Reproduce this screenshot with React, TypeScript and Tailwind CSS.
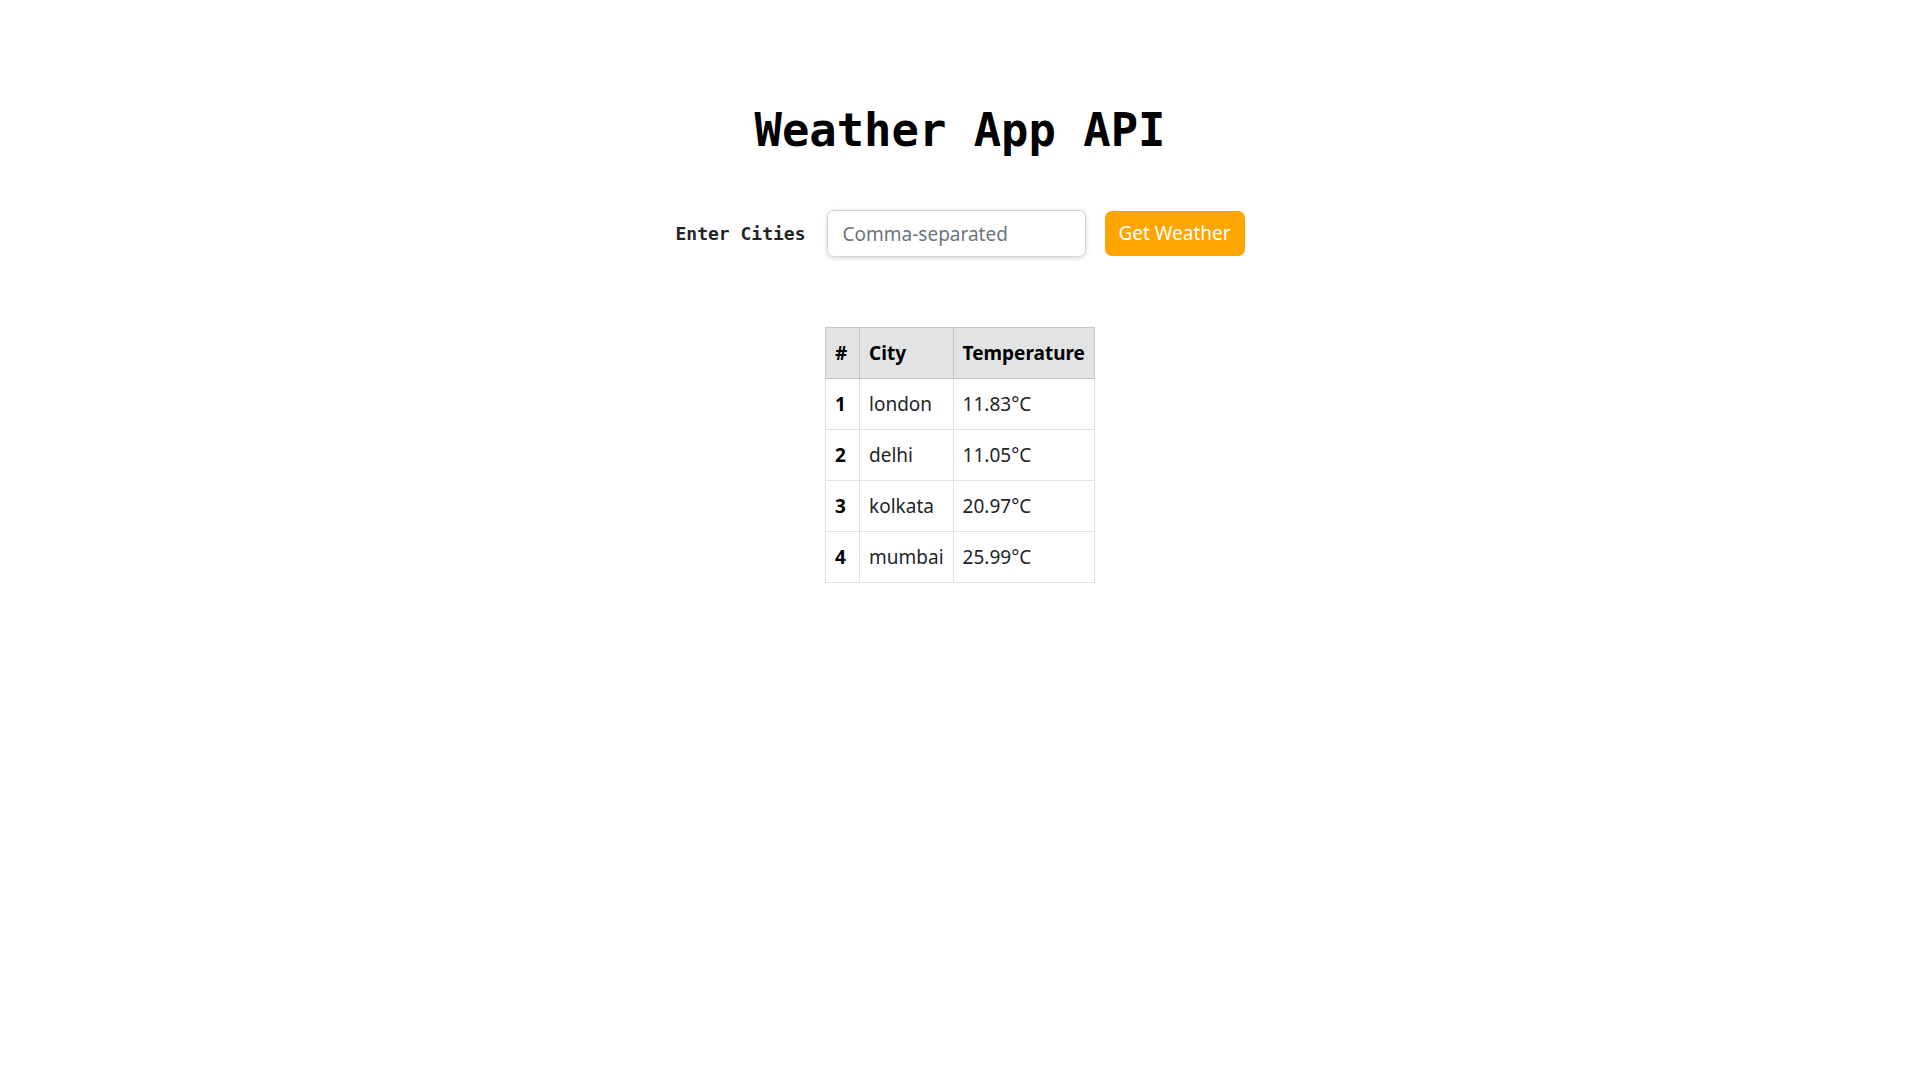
import { useState } from "react";

type Row = { city: string; temp: string };

const rows: Row[] = [
  { city: "london", temp: "11.83°C" },
  { city: "delhi", temp: "11.05°C" },
  { city: "kolkata", temp: "20.97°C" },
  { city: "mumbai", temp: "25.99°C" },
];

const sans = "font-['Noto_Sans','Open_Sans',sans-serif]";
const mono = "font-['DejaVu_Sans_Mono','Liberation_Mono',monospace]";

export default function App() {
  const [cities, setCities] = useState("");

  return (
    <div className="min-h-screen bg-white text-black">
      <div className="flex flex-col items-center pt-[101px]">
        <h1 className={`${mono} text-[45.5px] font-bold leading-[60px]`}>
          Weather App API
        </h1>

        <div className="mt-[49px] flex items-center">
          <label className={`${mono} text-[18px] font-bold text-[#212529]`}>
            Enter Cities
          </label>
          <input
            value={cities}
            onChange={(e) => setCities(e.target.value)}
            placeholder="Comma-separated"
            className={`${sans} ml-[21px] h-[47px] w-[259px] rounded-[7px] border border-[#d4d4d4] px-[15px] text-[19px] text-[#212529] shadow-[0_1px_4px_rgba(0,0,0,0.18)] outline-none placeholder:text-[#6c757d]`}
          />
          <button
            className={`${sans} ml-[19px] h-[45px] w-[140px] rounded-[7px] bg-[#ffa500] text-[19px] text-white`}
          >
            Get Weather
          </button>
        </div>

        <table className={`${sans} mt-[70px] border-collapse text-[19px] text-[#212529]`}>
          <thead>
            <tr className="bg-[#e2e3e5] text-black">
              <th className="h-[51px] w-[34px] border border-[#c4c5c7] px-[9px] text-left font-bold">#</th>
              <th className="h-[51px] w-[93px] border border-[#c4c5c7] px-[9px] text-left font-bold">City</th>
              <th className="h-[51px] w-[136px] border border-[#c4c5c7] px-[9px] text-left font-bold">Temperature</th>
            </tr>
          </thead>
          <tbody>
            {rows.map((r, i) => (
              <tr key={r.city}>
                <td className="h-[51px] border border-[#dee2e6] px-[9px] font-bold text-black">{i + 1}</td>
                <td className="h-[51px] border border-[#dee2e6] px-[9px]">{r.city}</td>
                <td className="h-[51px] border border-[#dee2e6] px-[9px]">{r.temp}</td>
              </tr>
            ))}
          </tbody>
        </table>
      </div>
    </div>
  );
}
